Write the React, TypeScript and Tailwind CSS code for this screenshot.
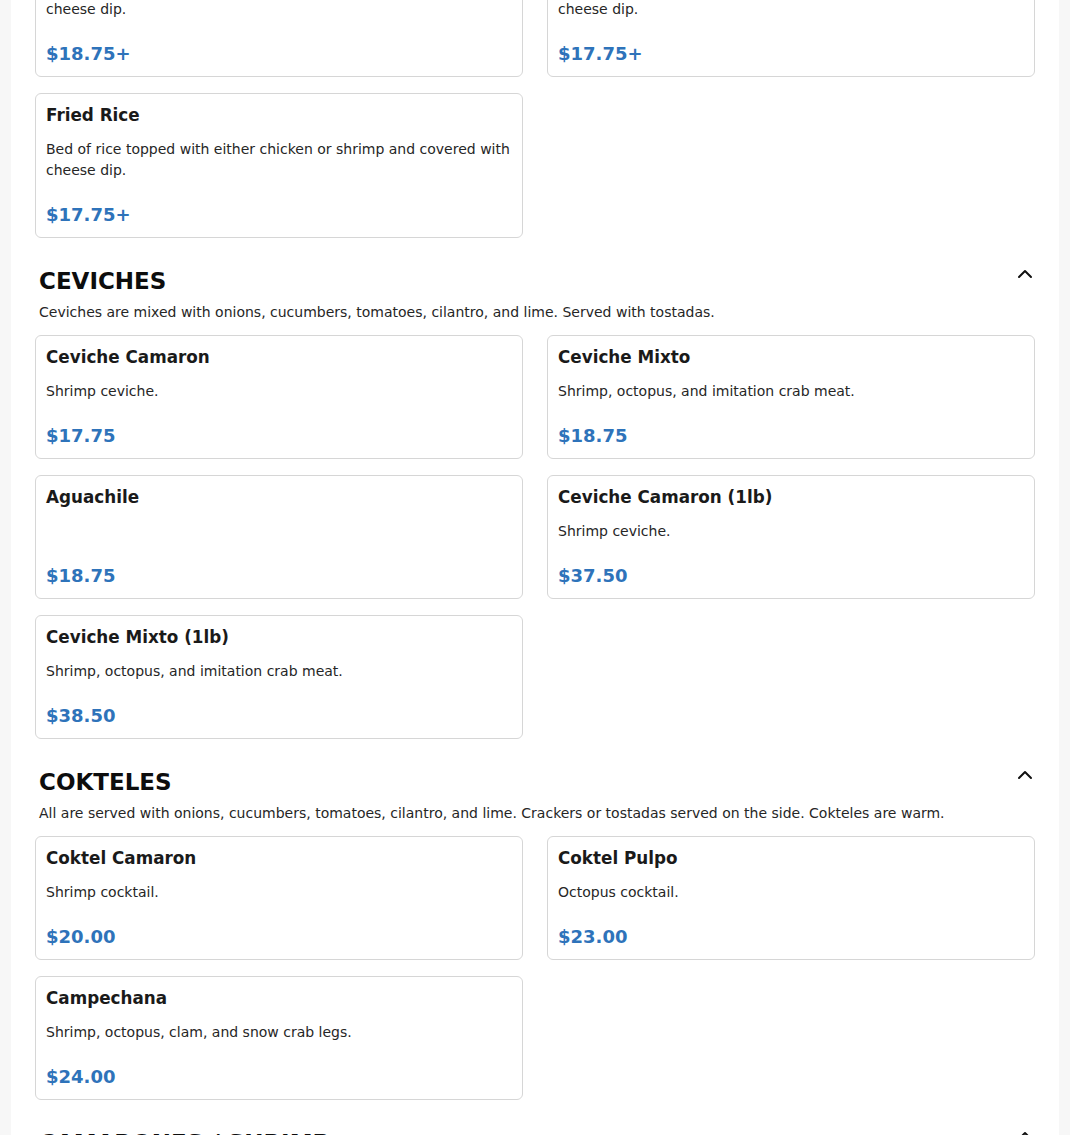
import React from 'react';
import { ChevronUp } from 'lucide-react';

type Item = { name: string; desc?: string; price: string };

type Section = { title: string; note?: string; items: Item[] };

const sections: Section[] = [
  {
    title: 'CEVICHES',
    note: 'Ceviches are mixed with onions, cucumbers, tomatoes, cilantro, and lime. Served with tostadas.',
    items: [
      { name: 'Ceviche Camaron', desc: 'Shrimp ceviche.', price: '$17.75' },
      { name: 'Ceviche Mixto', desc: 'Shrimp, octopus, and imitation crab meat.', price: '$18.75' },
      { name: 'Aguachile', price: '$18.75' },
      { name: 'Ceviche Camaron (1lb)', desc: 'Shrimp ceviche.', price: '$37.50' },
      { name: 'Ceviche Mixto (1lb)', desc: 'Shrimp, octopus, and imitation crab meat.', price: '$38.50' },
    ],
  },
  {
    title: 'COKTELES',
    note: 'All are served with onions, cucumbers, tomatoes, cilantro, and lime. Crackers or tostadas served on the side. Cokteles are warm.',
    items: [
      { name: 'Coktel Camaron', desc: 'Shrimp cocktail.', price: '$20.00' },
      { name: 'Coktel Pulpo', desc: 'Octopus cocktail.', price: '$23.00' },
      { name: 'Campechana', desc: 'Shrimp, octopus, clam, and snow crab legs.', price: '$24.00' },
    ],
  },
  {
    title: 'CAMARONES / SHRIMP',
    note: 'Served with rice, beans, and salad.',
    items: [
      { name: 'Camarones a la Diabla', desc: 'Shrimp cooked in a spicy red sauce.', price: '$18.75' },
      { name: 'Camarones al Mojo de Ajo', desc: 'Shrimp cooked in garlic butter.', price: '$18.75' },
    ],
  },
];

// row scrolled partly out of view at the top
const topItems: Item[] = [
  {
    name: 'Arroz con Pollo',
    desc: 'Bed of rice topped with either chicken or steak and covered with cheese dip.',
    price: '$18.75+',
  },
  {
    name: 'Arroz Texano',
    desc: 'Bed of rice topped with either chicken or steak and covered with cheese dip.',
    price: '$17.75+',
  },
  {
    name: 'Fried Rice',
    desc: 'Bed of rice topped with either chicken or shrimp and covered with cheese dip.',
    price: '$17.75+',
  },
];

const MenuCard: React.FC<{ item: Item }> = ({ item }) => (
  <div className="flex flex-col rounded-md border border-[#d6d6d6] bg-white px-[10px] pt-[11px] pb-[10px]">
    <h4 className="text-[16.8px] font-bold leading-[20px] text-[#1a1a1a]">{item.name}</h4>
    {item.desc && <p className="mt-[14px] text-[14px] leading-[21px] text-[#262626]">{item.desc}</p>}
    <div className="mt-auto pt-[22px] text-[18px] font-bold leading-[24px] text-[#2e73ba]">{item.price}</div>
  </div>
);

export default function App() {
  return (
    <div className="flex min-h-screen flex-col bg-[#f7f7f7] font-['DejaVu_Sans',sans-serif]">
      <div className="mx-[11px] -mt-[68px] bg-white px-[24px] pb-[40px]">
        <div className="grid grid-cols-2 gap-x-6 gap-y-4">
          {topItems.map((it) => (
            <MenuCard key={it.name} item={it} />
          ))}
        </div>

        {sections.map((s) => (
          <section key={s.title} className="pt-[29px]">
            <div className="flex items-start justify-between pl-[4px]">
              <h2 className="text-[23px] font-bold leading-[28px] text-[#0d0d0d]">{s.title}</h2>
              <ChevronUp size={24} strokeWidth={2} className="-mt-[5px] -mr-[2px] text-[#111]" />
            </div>
            {s.note && <p className="mt-[7px] pl-[4px] text-[14px] leading-[21px] text-[#262626]">{s.note}</p>}
            <div className="mt-[12px] grid grid-cols-2 gap-x-6 gap-y-4">
              {s.items.map((it) => (
                <MenuCard key={it.name} item={it} />
              ))}
            </div>
          </section>
        ))}
      </div>
    </div>
  );
}
